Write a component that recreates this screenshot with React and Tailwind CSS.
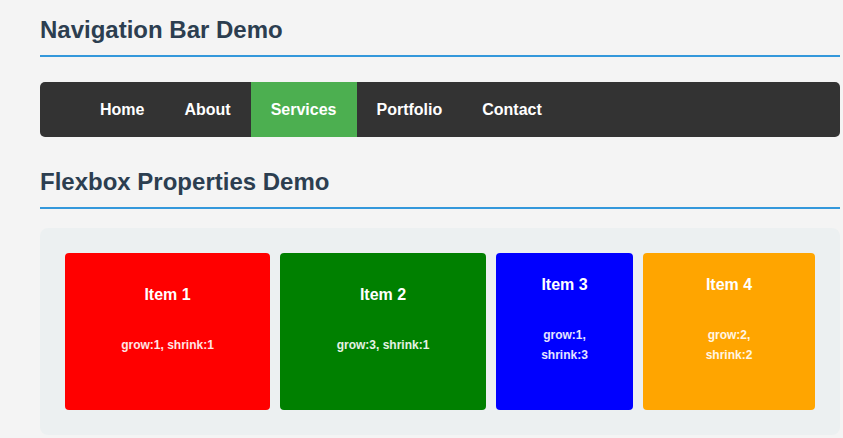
import React from "react";

const links = ["Home", "About", "Services", "Portfolio", "Contact"];

const items = [
  { title: "Item 1", desc: ["grow:1, shrink:1"], width: "w-[205px]", bg: "bg-[#ff0000]" },
  { title: "Item 2", desc: ["grow:3, shrink:1"], width: "w-[206px]", bg: "bg-[#008000]" },
  { title: "Item 3", desc: ["grow:1,", "shrink:3"], width: "w-[137px]", bg: "bg-[#0000ff]" },
  { title: "Item 4", desc: ["grow:2,", "shrink:2"], width: "w-[172px]", bg: "bg-[#ffa500]" },
];

function SectionTitle({ children, className = "" }) {
  return (
    <h2
      className={`text-[24px] leading-[28px] font-bold text-[#2c3e50] pb-[11px] border-b-2 border-[#3498db] ${className}`}
    >
      {children}
    </h2>
  );
}

export default function App() {
  return (
    <div
      className="h-screen w-full overflow-hidden bg-[#f4f4f4] pl-[40px] pt-[16px]"
      style={{ fontFamily: '"Liberation Sans", Arial, sans-serif' }}
    >
      <div className="w-[800px]">
        <SectionTitle>Navigation Bar Demo</SectionTitle>

        {/* nav */}
        <nav className="mt-[25px] h-[55px] rounded-[5px] bg-[#333333] overflow-hidden">
          <ul className="flex h-full pl-[40px]">
            {links.map((l) => (
              <li key={l}>
                <a
                  href="#"
                  className={`flex h-full items-center px-5 text-[16px] font-bold text-white ${
                    l === "Services" ? "bg-[#4caf50]" : ""
                  }`}
                >
                  {l}
                </a>
              </li>
            ))}
          </ul>
        </nav>

        <SectionTitle className="mt-[31px]">Flexbox Properties Demo</SectionTitle>

        {/* flex demo */}
        <div className="mt-[19px] flex gap-[10px] rounded-[8px] bg-[#ecf0f1] p-[25px]">
          {items.map((it) => (
            <div
              key={it.title}
              className={`${it.width} ${it.bg} h-[157px] shrink-0 rounded-[4px] flex flex-col items-center justify-center pb-[22px] text-center text-white`}
            >
              <h3 className="text-[16px] leading-[18px] font-bold">{it.title}</h3>
              <p className="mt-[31px] text-[12px] leading-5 font-bold text-white/90">
                {it.desc.map((d, i) => (
                  <React.Fragment key={i}>
                    {i > 0 && <br />}
                    {d}
                  </React.Fragment>
                ))}
              </p>
            </div>
          ))}
        </div>
      </div>
    </div>
  );
}
